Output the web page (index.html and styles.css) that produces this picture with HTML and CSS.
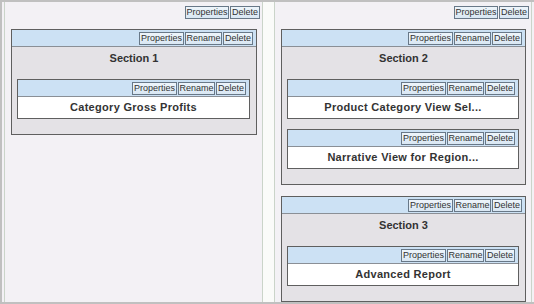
FILE: index.html
```html
<!DOCTYPE html>
<html lang="en">
<head>
    <meta charset="UTF-8">
    <title>Page Layout</title>
    <link rel="stylesheet" href="styles.css">
</head>
<body>
    <div class="layout">
        <div class="column">
            <div class="column-bar">
                <span class="btn">Properties</span><span class="btn">Delete</span>
            </div>
            <div class="section">
                <div class="bar">
                    <span class="btn">Properties</span><span class="btn">Rename</span><span class="btn">Delete</span>
                </div>
                <div class="section-title">Section 1</div>
                <div class="view">
                    <div class="bar">
                        <span class="btn">Properties</span><span class="btn">Rename</span><span class="btn">Delete</span>
                    </div>
                    <div class="view-title">Category Gross Profits</div>
                </div>
            </div>
        </div>
        <div class="column">
            <div class="column-bar">
                <span class="btn">Properties</span><span class="btn">Delete</span>
            </div>
            <div class="section">
                <div class="bar">
                    <span class="btn">Properties</span><span class="btn">Rename</span><span class="btn">Delete</span>
                </div>
                <div class="section-title">Section 2</div>
                <div class="view">
                    <div class="bar">
                        <span class="btn">Properties</span><span class="btn">Rename</span><span class="btn">Delete</span>
                    </div>
                    <div class="view-title">Product Category View Sel...</div>
                </div>
                <div class="view">
                    <div class="bar">
                        <span class="btn">Properties</span><span class="btn">Rename</span><span class="btn">Delete</span>
                    </div>
                    <div class="view-title">Narrative View for Region...</div>
                </div>
            </div>
            <div class="section">
                <div class="bar">
                    <span class="btn">Properties</span><span class="btn">Rename</span><span class="btn">Delete</span>
                </div>
                <div class="section-title">Section 3</div>
                <div class="view">
                    <div class="bar">
                        <span class="btn">Properties</span><span class="btn">Rename</span><span class="btn">Delete</span>
                    </div>
                    <div class="view-title">Advanced Report</div>
                </div>
            </div>
        </div>
    </div>
</body>
</html>
```

FILE: styles.css
```css
body {
    margin: 0;
    background-color: #fafbf9;
    font-family: "Liberation Sans", Arial, sans-serif;
    color: #333;
}
.layout {
    display: grid;
    grid-template-columns: 259px 258px;
    column-gap: 11px;
    height: 300px;
    padding: 0 2px;
    border-top: 2px solid #c0c0c0;
    border-bottom: 2px solid #c0c0c0;
    border-left: 2px solid #c0c0c0;
    background-color: #f3f1f5;
}
.column {
    background-color: #f3f1f5;
    border-left: 1px solid #cad4c9;
    border-right: 1px solid #cad4c9;
    overflow: hidden;
}
.layout .column + .column {
    box-shadow: -11px 0 0 #fafbf9;
}
.column-bar {
    display: flex;
    justify-content: flex-end;
    padding: 4px 2px 0 0;
}
.btn {
    display: inline-block;
    height: 11px;
    line-height: 11px;
    padding: 0 1px 0 0.5px;
    margin-left: 1px;
    font-size: 9px;
    color: #333;
    background: linear-gradient(#eef5fb, #d9e7f3);
    border: 1px solid #687888;
    white-space: nowrap;
}
.section {
    margin: 10px 5px 11px 6px;
    background-color: #e4e2e6;
    border: 1px solid #5f5f5f;
    padding-bottom: 15px;
}
.bar {
    display: flex;
    justify-content: flex-end;
    height: 13px;
    padding: 2px 3px 1px 0;
    background-color: #cce1f4;
    border-bottom: 1px solid #8a8f96;
}
.section-title {
    padding: 4px 0 13px;
    line-height: 15px;
    font-size: 11px;
    font-weight: bold;
    text-align: center;
}
.view {
    margin: 0 6px 0 5px;
    background-color: #fff;
    border: 1px solid #5f5f5f;
}
.view + .view {
    margin-top: 10px;
}
.view-title {
    padding: 3px 0;
    line-height: 15px;
    font-size: 11px;
    font-weight: bold;
    letter-spacing: 0.3px;
    text-align: center;
}
```
